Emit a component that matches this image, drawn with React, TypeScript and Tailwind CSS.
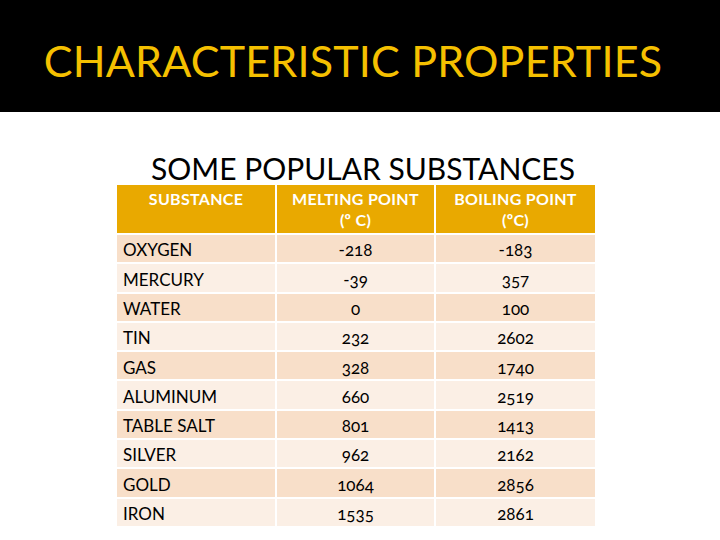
import React from "react";

const rows: [string, string, string][] = [
  ["OXYGEN", "-218", "-183"],
  ["MERCURY", "-39", "357"],
  ["WATER", "0", "100"],
  ["TIN", "232", "2602"],
  ["GAS", "328", "1740"],
  ["ALUMINUM", "660", "2519"],
  ["TABLE SALT", "801", "1413"],
  ["SILVER", "962", "2162"],
  ["GOLD", "1064", "2856"],
  ["IRON", "1535", "2861"],
];

export default function App() {
  return (
    <div
      className="w-[720px] h-[540px] bg-white overflow-hidden oldstyle-nums"
      style={{ fontFamily: "Lato, 'Open Sans', sans-serif" }}
    >
      <div className="h-[112px] bg-black flex items-center justify-center pr-[14px]">
        <h1 className="text-[43px] leading-none text-[#f5c000] tracking-[0.2px] mt-[9px]">
          CHARACTERISTIC PROPERTIES
        </h1>
      </div>
      <div className="pl-[6px] text-center text-[30px] leading-none text-black mt-[41px] h-[32px]">
        SOME POPULAR SUBSTANCES
      </div>
      <div className="ml-[117px] grid grid-cols-[158px_157px_159px] gap-[2px]">
        <div className="bg-[#e9a900] h-[48px] text-white font-bold text-[16px] text-center pt-[3px] leading-[21px] tracking-[0.3px]">
          SUBSTANCE
        </div>
        <div className="bg-[#e9a900] h-[48px] text-white font-bold text-[16px] text-center pt-[3px] leading-[21px] tracking-[0.3px]">
          MELTING POINT
          <br />
          (º C)
        </div>
        <div className="bg-[#e9a900] h-[48px] text-white font-bold text-[16px] text-center pt-[3px] leading-[21px] tracking-[0.3px]">
          BOILING POINT
          <br />
          (ºC)
        </div>
        {rows.map((r, i) => {
          const bg = i % 2 === 0 ? "bg-[#f8dfc9]" : "bg-[#fbefe5]";
          return (
            <React.Fragment key={r[0]}>
              <div className={`${bg} h-[27.3px] flex items-center pl-[6px] pt-[3px] text-[17px] text-black`}>
                {r[0]}
              </div>
              <div className={`${bg} h-[27.3px] flex items-center justify-center pt-[3px] text-[17px] text-black`}>
                {r[1]}
              </div>
              <div className={`${bg} h-[27.3px] flex items-center justify-center pt-[3px] text-[17px] text-black`}>
                {r[2]}
              </div>
            </React.Fragment>
          );
        })}
      </div>
    </div>
  );
}
